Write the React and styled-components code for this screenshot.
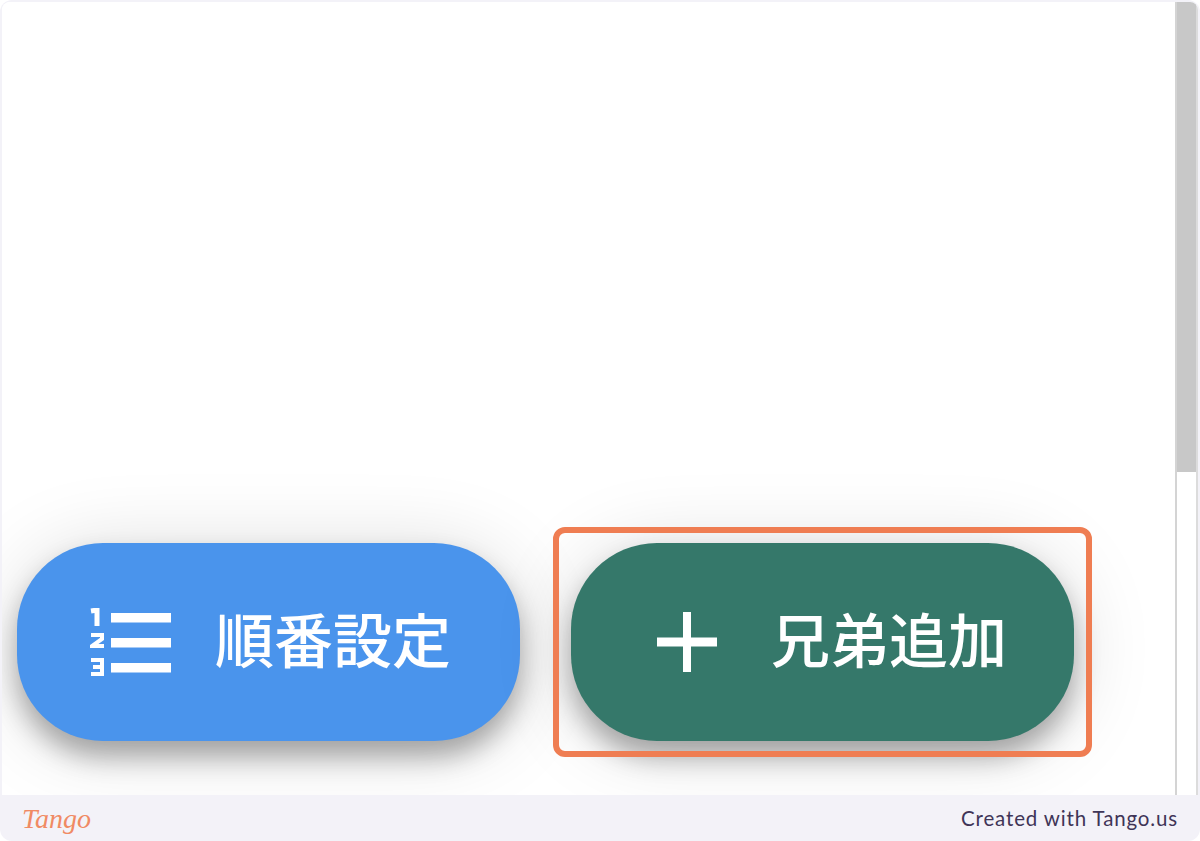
import React from 'react';
import styled, { createGlobalStyle } from 'styled-components';

const Global = createGlobalStyle`
  html, body { margin: 0; padding: 0; background: #fff; }
  body { font-family: "Noto Sans CJK JP", "Liberation Sans", sans-serif; }
`;

const Frame = styled.div`
  width: 1200px;
  height: 841px;
  box-sizing: border-box;
  padding: 2px 2px 0;
  background: #f3f2f8;
  border-radius: 12px;
  display: flex;
  flex-direction: column;
  overflow: hidden;
`;

const Viewport = styled.div`
  height: 793px;
  display: flex;
  background: #fff;
  border-radius: 8px 8px 0 0;
  overflow: hidden;
`;

const Content = styled.div`
  flex: 1;
  display: flex;
  align-items: flex-end;
  gap: 51px;
  padding: 0 0 54px 15px;
  background: #fff;
`;

const Scrollbar = styled.div`
  width: 23px;
  box-sizing: border-box;
  border-left: 2px solid #d4d4d4;
  border-right: 2px solid #dcdcdc;
  background: #fff;
`;

const Thumb = styled.div`
  height: 470px;
  background: #c8c8c8;
`;

const Fab = styled.div`
  position: relative;
  width: 503px;
  height: 198px;
  box-sizing: border-box;
  flex: none;
  display: flex;
  align-items: center;
  padding-left: ${p => p.$inset}px;
  gap: ${p => p.$gap}px;
  border-radius: 86px;
  background: ${p => p.$color};
  box-shadow: 0 16px 26px rgba(0, 0, 0, 0.3), 0 6px 80px rgba(0, 0, 0, 0.15);
  color: #fff;
`;

const Label = styled.span`
  font-family: "Noto Sans CJK JP", sans-serif;
  font-size: 59px;
  font-weight: 500;
  line-height: 1;
  white-space: nowrap;
  position: relative;
  top: -5px;
  filter: blur(0.5px);
`;

const Highlight = styled.div`
  position: absolute;
  left: -18px;
  top: -16px;
  width: 539px;
  height: 230px;
  box-sizing: border-box;
  border: 6px solid #ef7d52;
  border-radius: 12px;
  pointer-events: none;
`;

const Footer = styled.div`
  flex: 1;
  display: flex;
  align-items: center;
  justify-content: space-between;
  padding: 0 20px 0 20px;
`;

const Logo = styled.span`
  font-family: "Liberation Serif", serif;
  font-style: italic;
  font-size: 28px;
  line-height: 1;
  color: #f08a64;
  position: relative;
  top: 1px;
`;

const Credit = styled.span`
  font-family: "Lato", sans-serif;
  font-size: 20.5px;
  letter-spacing: 0.85px;
  color: #3f3557;
`;

function OrderIcon() {
  return (
    <svg width="81" height="68" viewBox="0 0 81 68" fill="none" style={{ flex: 'none', filter: 'blur(0.4px)' }}>
      <g stroke="#fff" strokeWidth="4">
        <polyline points="1,3 7,2 7,18" strokeWidth="5" />
        <polyline points="1,27 12,27 12,31 2,38 14,38" />
        <polyline points="1,52 12,52 12,66 1,66" />
        <line x1="3" y1="59" x2="12" y2="59" />
      </g>
      <rect x="21" y="5" width="60" height="9.5" fill="#fff" />
      <rect x="21" y="30" width="60" height="9.5" fill="#fff" />
      <rect x="21" y="55" width="60" height="9.5" fill="#fff" />
    </svg>
  );
}

function PlusIcon() {
  return (
    <svg width="60" height="60" viewBox="0 0 60 60" style={{ flex: 'none', filter: 'blur(0.4px)' }}>
      <rect x="0" y="25.5" width="60" height="9" fill="#fff" />
      <rect x="26" y="0" width="8" height="60" fill="#fff" />
    </svg>
  );
}

export default function App() {
  return (
    <Frame>
      <Global />
      <Viewport>
        <Content>
          <Fab $color="#4a94ec" $inset={73} $gap={44}>
            <OrderIcon />
            <Label>順番設定</Label>
          </Fab>
          <Fab $color="#35786a" $inset={86} $gap={54}>
            <PlusIcon />
            <Label>兄弟追加</Label>
            <Highlight />
          </Fab>
        </Content>
        <Scrollbar>
          <Thumb />
        </Scrollbar>
      </Viewport>
      <Footer>
        <Logo>Tango</Logo>
        <Credit>Created with Tango.us</Credit>
      </Footer>
    </Frame>
  );
}
